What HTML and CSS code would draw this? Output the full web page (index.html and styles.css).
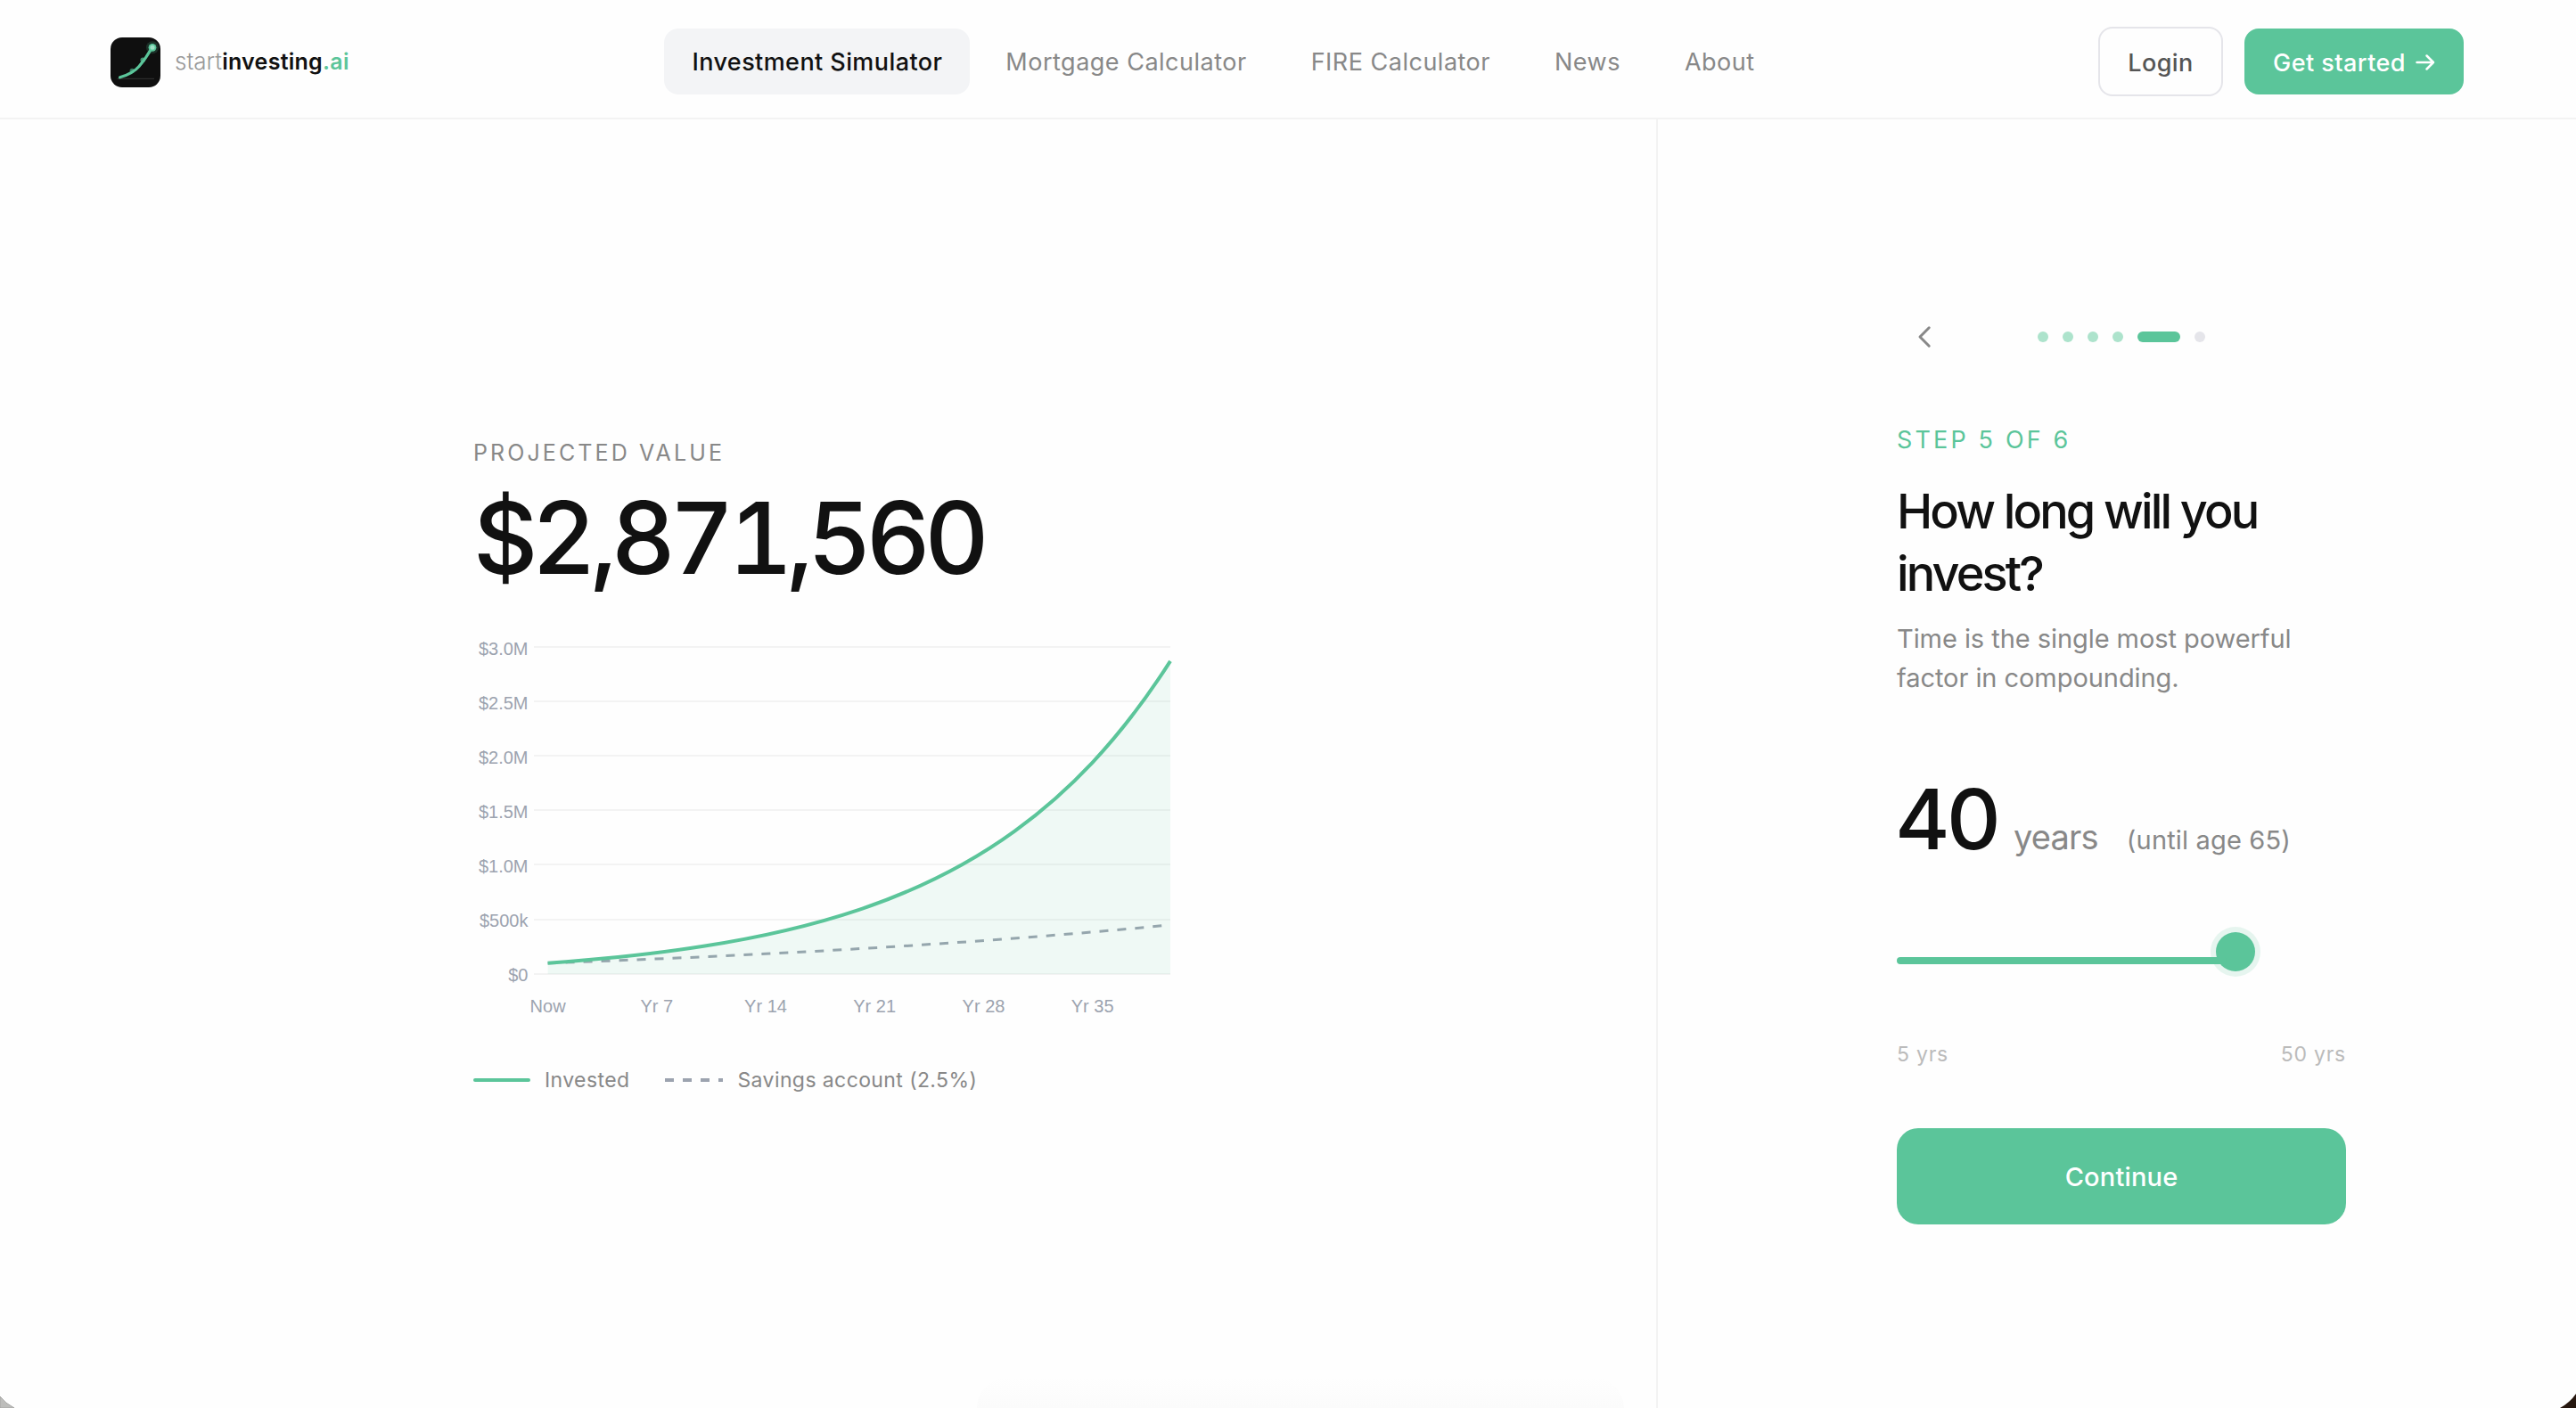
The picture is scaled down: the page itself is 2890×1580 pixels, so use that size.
FILE: index.html
```html
<!DOCTYPE html>
<html lang="en">
<head>
    <meta charset="UTF-8">
    <meta name="viewport" content="width=device-width, initial-scale=1.0">
    <title>Investment Simulator - startinvesting.ai</title>
    <link rel="stylesheet" href="styles.css">
</head>
<body>
    <header class="header">
        <a class="logo">
            <svg class="logo-mark" viewBox="0 0 56 56">
                <rect width="56" height="56" rx="13" fill="#0f0f0f"/>
                <line x1="7.5" y1="46.4" x2="49" y2="46.4" stroke="#2c2c2c" stroke-width="1.2"/>
                <circle cx="24.2" cy="37.4" r="2.6" fill="#5bc59a" opacity="0.6"/>
                <circle cx="36.3" cy="25.2" r="2.8" fill="#5bc59a" opacity="0.7"/>
                <path d="M10.5 44.8 C21 41.8 27.5 37.8 32 32.5 C38 25.5 42.5 18.5 46.5 11.5" fill="none" stroke="#5bc59a" stroke-width="3.2" stroke-linecap="round"/>
                <circle cx="47" cy="11.3" r="7" fill="#5bc59a" opacity="0.18"/>
                <circle cx="47" cy="11.3" r="4.4" fill="#5bc59a"/>
                <circle cx="47" cy="11.3" r="2.5" fill="#a0dfc5"/>
            </svg>
            <span class="logo-text"><span class="logo-start">start</span><span class="logo-main">investing</span><span class="logo-ai">.ai</span></span>
        </a>

        <nav class="nav">
            <a class="nav-link active">Investment Simulator</a>
            <a class="nav-link">Mortgage Calculator</a>
            <a class="nav-link">FIRE Calculator</a>
            <a class="nav-link">News</a>
            <a class="nav-link">About</a>
        </nav>

        <div class="actions">
            <a class="btn btn-login">Login</a>
            <a class="btn btn-start">Get started
                <svg class="arrow" viewBox="0 0 22 20">
                    <path d="M1.5 10 H20 M12.5 2.5 L20 10 L12.5 17.5" fill="none" stroke="#fff" stroke-width="2.5" stroke-linecap="round" stroke-linejoin="round"/>
                </svg>
            </a>
        </div>
    </header>

    <main class="main">
        <section class="result">
            <div class="result-label">PROJECTED VALUE</div>
            <div class="result-value">$2,871,560</div>

            <svg class="chart" viewBox="0 0 784 444">
                <g class="grid">
                    <path d="M68 16H782M68 77H782M68 138H782M68 199H782M68 260H782M68 322H782M68 383H782"/>
                </g>
                <g class="y-labels">
                    <text x="61.5" y="25">$3.0M</text>
                    <text x="61.5" y="86">$2.5M</text>
                    <text x="61.5" y="147">$2.0M</text>
                    <text x="61.5" y="208">$1.5M</text>
                    <text x="61.5" y="269">$1.0M</text>
                    <text x="61.5" y="330">$500k</text>
                    <text x="61.5" y="391">$0</text>
                </g>
                <g class="x-labels">
                    <text x="83.6" y="426">Now</text>
                    <text x="205.8" y="426">Yr 7</text>
                    <text x="328" y="426">Yr 14</text>
                    <text x="450.2" y="426">Yr 21</text>
                    <text x="572.5" y="426">Yr 28</text>
                    <text x="694.7" y="426">Yr 35</text>
                </g>
                <path class="line-savings" d="M83.6 370.8 C316.4 362.4 549.2 350.4 782 327.9"/>
                <path class="area" d="M83.6 370.8 C141.8 366.6 200 360.9 258.2 351.8 C316.4 342.8 374.6 330.5 432.8 310.9 C491 291.3 549.2 264.8 607.4 222.6 C665.6 180.3 723.8 123 782 31.8 V383 H83.6 Z"/>
                <path class="line-invested" d="M83.6 370.8 C141.8 366.6 200 360.9 258.2 351.8 C316.4 342.8 374.6 330.5 432.8 310.9 C491 291.3 549.2 264.8 607.4 222.6 C665.6 180.3 723.8 123 782 31.8"/>
            </svg>

            <div class="legend">
                <div class="legend-item">
                    <span class="legend-line"></span>
                    <span>Invested</span>
                </div>
                <div class="legend-item">
                    <svg class="legend-dash" viewBox="0 0 65 4">
                        <line x1="0" y1="2" x2="65" y2="2" stroke="#9ca3af" stroke-width="4" stroke-dasharray="10 10"/>
                    </svg>
                    <span>Savings account (2.5%)</span>
                </div>
            </div>
        </section>

        <aside class="panel">
            <div class="steps">
                <svg class="back" viewBox="0 0 44 44">
                    <path d="M21.2 11.8 L11 22 L21.2 32.2" fill="none" stroke="#888" stroke-width="3" stroke-linecap="round" stroke-linejoin="round"/>
                </svg>
                <div class="dots">
                    <span class="dot done"></span>
                    <span class="dot done"></span>
                    <span class="dot done"></span>
                    <span class="dot done"></span>
                    <span class="dot current"></span>
                    <span class="dot"></span>
                </div>
            </div>

            <div class="step-label">STEP 5 OF 6</div>
            <h1 class="question">How long will you invest?</h1>
            <p class="hint">Time is the single most powerful factor in compounding.</p>

            <div class="amount">
                <span class="amount-number">40</span>
                <span class="amount-unit">years</span>
                <span class="amount-note">(until age 65)</span>
            </div>

            <div class="slider">
                <div class="slider-fill"></div>
                <div class="slider-thumb"></div>
            </div>
            <div class="range">
                <span>5 yrs</span>
                <span>50 yrs</span>
            </div>

            <button class="continue">Continue</button>
        </aside>
    </main>

    <!-- rounded window corners and the dock shadow -->
    <div class="dock-shadow"></div>
    <svg class="corner corner-left" viewBox="0 0 16 14"><path d="M0 1 Q6 9 16 14 H0 Z" fill="#bdbdbb" stroke="#a5a5a3"/></svg>
    <svg class="corner corner-right" viewBox="0 0 18 16"><path d="M18 0 Q11 10 0 16 H18 Z" fill="#26170f"/></svg>
</body>
</html>
```
FILE: styles.css
```css
* {
    box-sizing: border-box;
}

body {
    font-family: Inter, -apple-system, "Liberation Sans", sans-serif;
    background: #fefefe;
    color: #111;
    margin: 0;
    height: 1580px;
    position: relative;
    overflow: hidden;
}

/* Header */
.header {
    display: flex;
    justify-content: space-between;
    align-items: center;
    height: 134px;
    padding: 6px 126px 0 124px;
    border-bottom: 2px solid #f3f3f3;
    white-space: nowrap;
}

.logo {
    display: flex;
    align-items: center;
    gap: 16px;
    width: 268px;
    padding-top: 2px;
}

.logo-mark {
    width: 56px;
    height: 56px;
}

.logo-text {
    margin-top: -2px;
    font-size: 25px;
    line-height: 40px;
}

.logo-start {
    font-weight: 300;
    font-size: 26px;
    color: #999;
}

.logo-main {
    font-weight: 600;
    letter-spacing: 0.27px;
}

.logo-ai {
    font-weight: 600;
    letter-spacing: 0.3px;
    color: #5bc59a;
}

.nav {
    display: flex;
    gap: 8px;
}

.nav-link {
    padding: 2px 32px 0;
    border-radius: 16px;
    font-size: 27px;
    line-height: 72px;
    letter-spacing: 0.5px;
    color: #888;
}

.nav-link.active {
    padding: 2px 31px 0;
    background: #f3f4f6;
    color: #111;
    font-weight: 500;
    letter-spacing: 0.42px;
}

.actions {
    display: flex;
    align-items: center;
    gap: 24px;
}

.btn {
    display: flex;
    align-items: center;
    justify-content: center;
    height: 74px;
    padding-top: 2px;
    border-radius: 16px;
    font-size: 27px;
    font-weight: 500;
    letter-spacing: 0.45px;
}

.btn-login {
    width: 140px;
    height: 78px;
    border: 2px solid #e5e5ea;
    color: #555;
}

.btn-start {
    gap: 11px;
    width: 246px;
    background: #5bc59a;
    color: #fff;
}

.arrow {
    width: 22px;
    height: 20px;
}

/* Layout */
.main {
    display: grid;
    grid-template-columns: 1858px 1fr;
    height: 1446px;
}

.result {
    padding: 358px 0 0 531px;
}

.panel {
    border-left: 2px solid #f3f3f3;
    padding: 222px 258px 0 268px;
}

/* Projection */
.result-label {
    font-size: 25px;
    line-height: 32px;
    letter-spacing: 3.1px;
    color: #888;
}

.result-value {
    margin-top: 23px;
    font-size: 112px;
    line-height: 112px;
    font-weight: 500;
    letter-spacing: -6.85px;
    font-variant-numeric: tabular-nums;
}

.chart {
    display: block;
    width: 784px;
    height: 444px;
    margin-top: 51px;
}

.grid path {
    stroke: #f3f3f3;
    stroke-width: 2;
}

.y-labels,
.x-labels {
    font-family: "Liberation Sans", Arial, sans-serif;
    font-size: 20px;
    fill: #9ca3af;
    text-anchor: end;
}

.x-labels {
    text-anchor: middle;
}

.area {
    fill: #5bc59a;
    fill-opacity: 0.09;
}

.line-invested {
    fill: none;
    stroke: #5bc59a;
    stroke-width: 4;
}

.line-savings {
    fill: none;
    stroke: #9ca3af;
    stroke-width: 3;
    stroke-dasharray: 10 10;
}

.legend {
    display: flex;
    gap: 40px;
    margin-top: 40px;
    font-size: 23px;
    line-height: 36px;
    letter-spacing: 0.4px;
    color: #888;
}

.legend-item {
    display: flex;
    align-items: center;
    gap: 16px;
}

.legend-line {
    width: 64px;
    height: 4px;
    border-radius: 2px;
    background: #5bc59a;
}

.legend-dash {
    width: 65px;
    height: 4px;
}

/* Question panel */
.steps {
    display: grid;
    grid-template-columns: 44px 1fr 44px;
    align-items: center;
    height: 44px;
}

.back {
    width: 44px;
    height: 44px;
    margin-left: 15px;
}

.dots {
    display: flex;
    justify-content: center;
    gap: 16px;
}

.dot {
    width: 12px;
    height: 12px;
    border-radius: 6px;
    background: #e5e5ea;
}

.dot.done {
    background: #ade3cc;
}

.dot.current {
    width: 48px;
    background: #5bc59a;
}

.step-label {
    margin-top: 77px;
    font-size: 27px;
    line-height: 34px;
    letter-spacing: 3.15px;
    color: #5bc59a;
}

.question {
    margin: 28px 0 0;
    width: 460px;
    font-size: 54px;
    line-height: 70px;
    font-weight: 500;
    letter-spacing: -2.85px;
}

.hint {
    margin: 16px 0 0;
    width: 470px;
    font-size: 29px;
    line-height: 44px;
    letter-spacing: -0.06px;
    color: #888;
}

.amount {
    display: flex;
    align-items: baseline;
    margin-top: 89px;
    height: 94px;
    line-height: 94px;
    color: #888;
}

.amount-number {
    margin-left: -2px;
    font-size: 94px;
    font-weight: 500;
    letter-spacing: -3.7px;
    color: #111;
}

.amount-unit {
    margin-left: 18px;
    font-size: 38px;
    letter-spacing: -0.8px;
}

.amount-note {
    margin-left: 32px;
    font-size: 29px;
    letter-spacing: 0.17px;
}

.slider {
    position: relative;
    height: 44px;
    margin-top: 80px;
}

.slider-fill {
    position: absolute;
    z-index: 1;
    left: 0;
    top: 28px;
    width: 370px;
    height: 8px;
    border-radius: 4px;
    background: #5bc59a;
}

.slider-thumb {
    position: absolute;
    left: 358px;
    top: 0;
    width: 44px;
    height: 44px;
    border-radius: 50%;
    background: #5bc59a;
    box-shadow: 0 0 0 6px rgba(91, 197, 154, 0.15);
}

.range {
    display: flex;
    justify-content: space-between;
    margin-top: 78px;
    font-size: 23px;
    line-height: 30px;
    letter-spacing: 0.75px;
    color: #bbb;
}

.continue {
    display: block;
    width: 504px;
    height: 108px;
    margin-top: 68px;
    padding: 0;
    border: none;
    border-radius: 24px;
    background: #5bc59a;
    color: #fff;
    font-family: inherit;
    font-size: 29px;
    font-weight: 500;
    letter-spacing: 0.17px;
}

.dock-shadow {
    position: absolute;
    left: 1096px;
    bottom: 0;
    width: 726px;
    height: 34px;
    border-radius: 70px 70px 0 0;
    background: linear-gradient(#fefefe, #fbfbfb);
}

.corner {
    position: absolute;
    bottom: 0;
}

.corner-left {
    left: 0;
    width: 16px;
    height: 14px;
}

.corner-right {
    right: 0;
    width: 18px;
    height: 16px;
}
```
